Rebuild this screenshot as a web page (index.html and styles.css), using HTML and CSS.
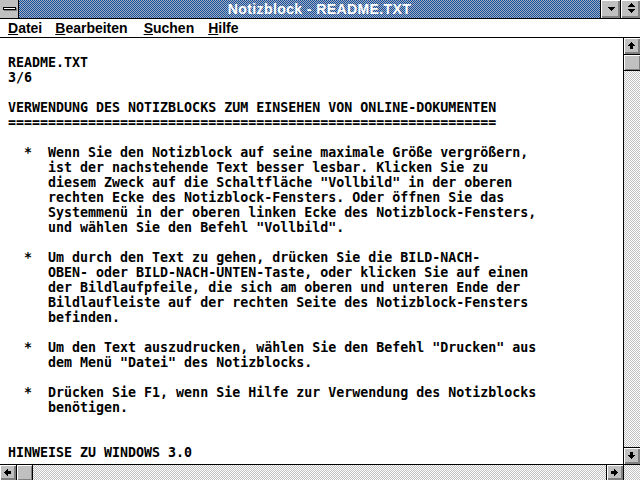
FILE: index.html
```html
<!DOCTYPE html>
<html lang="de">
<head>
<meta charset="utf-8">
<title>Notizblock - README.TXT</title>
<link rel="stylesheet" href="styles.css">
</head>
<body>
<div class="window">
  <div class="titlebar">
    <div class="sysbox"><div class="sysbar"></div></div>
    <div class="title">Notizblock - README.TXT</div>
    <div class="tbtn">
      <svg width="18" height="18" viewBox="0 0 18 18" shape-rendering="crispEdges"><rect x="6" y="7" width="7" height="1"/><rect x="7" y="8" width="5" height="1"/><rect x="8" y="9" width="3" height="1"/><rect x="9" y="10" width="1" height="1"/></svg>
    </div>
    <div class="tbtn">
      <svg width="18" height="18" viewBox="0 0 18 18" shape-rendering="crispEdges"><rect x="9" y="3" width="1" height="1"/><rect x="8" y="4" width="3" height="1"/><rect x="7" y="5" width="5" height="1"/><rect x="6" y="6" width="7" height="1"/><rect x="6" y="9" width="7" height="1"/><rect x="7" y="10" width="5" height="1"/><rect x="8" y="11" width="3" height="1"/><rect x="9" y="12" width="1" height="1"/></svg>
    </div>
  </div>
  <div class="menubar">
    <span class="menu m1"><u>D</u>atei</span>
    <span class="menu m2"><u>B</u>earbeiten</span>
    <span class="menu m3"><u>S</u>uchen</span>
    <span class="menu"><u>H</u>ilfe</span>
  </div>
  <div class="client">
    <pre class="text">

README.TXT
3/6

VERWENDUNG DES NOTIZBLOCKS ZUM EINSEHEN VON ONLINE-DOKUMENTEN
=============================================================

  *  Wenn Sie den Notizblock auf seine maximale Größe vergrößern,
     ist der nachstehende Text besser lesbar. Klicken Sie zu
     diesem Zweck auf die Schaltfläche "Vollbild" in der oberen
     rechten Ecke des Notizblock-Fensters. Oder öffnen Sie das
     Systemmenü in der oberen linken Ecke des Notizblock-Fensters,
     und wählen Sie den Befehl "Vollbild".

  *  Um durch den Text zu gehen, drücken Sie die BILD-NACH-
     OBEN- oder BILD-NACH-UNTEN-Taste, oder klicken Sie auf einen
     der Bildlaufpfeile, die sich am oberen und unteren Ende der
     Bildlaufleiste auf der rechten Seite des Notizblock-Fensters
     befinden.

  *  Um den Text auszudrucken, wählen Sie den Befehl "Drucken" aus
     dem Menü "Datei" des Notizblocks.

  *  Drücken Sie F1, wenn Sie Hilfe zur Verwendung des Notizblocks
     benötigen.


HINWEISE ZU WINDOWS 3.0</pre>
    <div class="vscroll">
      <div class="sbtn">
        <svg width="16" height="16" viewBox="0 0 16 16" shape-rendering="crispEdges"><rect x="7" y="4" width="1" height="1"/><rect x="6" y="5" width="3" height="1"/><rect x="5" y="6" width="5" height="1"/><rect x="4" y="7" width="7" height="1"/><rect x="6" y="8" width="3" height="3"/></svg>
      </div>
      <div class="sthumb"></div>
      <div class="track"></div>
      <div class="sbtn sbtn-bottom">
        <svg width="16" height="16" viewBox="0 0 16 16" shape-rendering="crispEdges"><rect x="6" y="4" width="3" height="3"/><rect x="4" y="7" width="7" height="1"/><rect x="5" y="8" width="5" height="1"/><rect x="6" y="9" width="3" height="1"/><rect x="7" y="10" width="1" height="1"/></svg>
      </div>
    </div>
  </div>
  <div class="hscroll">
    <div class="hbtn">
      <svg width="16" height="16" viewBox="0 0 16 16" shape-rendering="crispEdges"><rect x="4" y="7" width="1" height="1"/><rect x="5" y="6" width="1" height="3"/><rect x="6" y="5" width="1" height="5"/><rect x="7" y="4" width="1" height="7"/><rect x="8" y="6" width="3" height="3"/></svg>
    </div>
    <div class="hthumb"></div>
    <div class="track"></div>
    <div class="hbtn hbtn-right">
      <svg width="16" height="16" viewBox="0 0 16 16" shape-rendering="crispEdges"><rect x="4" y="6" width="3" height="3"/><rect x="7" y="4" width="1" height="7"/><rect x="8" y="5" width="1" height="5"/><rect x="9" y="6" width="1" height="3"/><rect x="10" y="7" width="1" height="1"/></svg>
    </div>
    <div class="corner"></div>
  </div>
</div>
</body>
</html>
```

FILE: styles.css
```css
html, body {
  margin: 0;
  padding: 0;
  background: #ffffff;
}

.window {
  width: 640px;
  height: 480px;
  display: flex;
  flex-direction: column;
  overflow: hidden;
  background: #ffffff;
}

.titlebar {
  height: 18px;
  display: flex;
  border-bottom: 1px solid #000;
  flex: none;
}

.sysbox {
  width: 18px;
  height: 18px;
  background: #c0c0c0;
  border-right: 1px solid #000;
  display: flex;
  align-items: center;
  justify-content: center;
  flex: none;
}

.sysbar {
  width: 11px;
  height: 1px;
  background: #fff;
  border: 1px solid #000;
  box-shadow: 1px 1px 0 #808080;
  margin-top: -1px;
}

.title {
  flex: 1;
  height: 18px;
  line-height: 18px;
  padding-left: 20px;
  text-align: center;
  color: #ffffff;
  font-family: "Liberation Sans", Arial, sans-serif;
  font-weight: bold;
  font-size: 14px;
  letter-spacing: 0.4px;
  background-color: #5878a8;
  background-image: repeating-conic-gradient(#1050a0 0% 25%, #a8acbc 0% 50%);
  background-size: 2px 2px;
}

.tbtn {
  width: 19px;
  height: 18px;
  border-left: 1px solid #000;
  background: #c0c0c0;
  box-shadow: inset 1px 1px 0 #fff, inset -1px -1px 0 #808080, inset -2px -2px 0 #808080;
  flex: none;
  display: flex;
  justify-content: center;
}

.tbtn svg {
  fill: #000;
  display: block;
}

.menubar {
  height: 18px;
  border-bottom: 1px solid #000;
  display: flex;
  align-items: center;
  font-family: "Liberation Sans", Arial, sans-serif;
  font-weight: bold;
  font-size: 14px;
  color: #000;
  padding-left: 8px;
  flex: none;
}

.menu {
  line-height: 18px;
}

.m1 { margin-right: 13px; }
.m2 { margin-right: 16px; }
.m3 { margin-right: 14px; }

.client {
  flex: 1;
  display: flex;
  min-height: 0;
}

.text {
  flex: 1;
  margin: 0;
  padding: 2px 0 0 8px;
  font-family: "DejaVu Sans Mono", "Liberation Mono", monospace;
  font-weight: bold;
  font-size: 13.3px;
  line-height: 15px;
  color: #000;
  overflow: hidden;
  white-space: pre;
}

.vscroll {
  width: 16px;
  border-left: 1px solid #000;
  display: flex;
  flex-direction: column;
  flex: none;
}

.sbtn, .hbtn {
  width: 16px;
  height: 16px;
  background: #c0c0c0;
  box-shadow: inset 1px 1px 0 #fff, inset -1px -1px 0 #808080, inset -2px -2px 0 #808080;
  flex: none;
}

.sbtn svg, .hbtn svg {
  fill: #000;
  display: block;
}

.sthumb {
  height: 15px;
  border-top: 1px solid #000;
  border-bottom: 1px solid #000;
  background: #c0c0c0;
  box-shadow: inset 1px 1px 0 #fff, inset -1px -1px 0 #808080;
  flex: none;
}

.track {
  flex: 1;
  background-color: #e0e0e0;
  background-image: repeating-conic-gradient(#c0c0c0 0% 25%, #ffffff 0% 50%);
  background-size: 2px 2px;
}

.sbtn-bottom {
  border-top: 1px solid #000;
}

.hscroll {
  height: 15px;
  border-top: 1px solid #000;
  display: flex;
  flex: none;
}

.hbtn {
  height: 15px;
  overflow: hidden;
}

.hthumb {
  width: 15px;
  height: 15px;
  border-left: 1px solid #000;
  border-right: 1px solid #000;
  background: #c0c0c0;
  box-shadow: inset 1px 1px 0 #fff, inset -1px -1px 0 #808080;
  flex: none;
}

.hbtn-right {
  border-left: 1px solid #000;
}

.corner {
  width: 16px;
  border-left: 1px solid #000;
  background-image: repeating-conic-gradient(#c0c0c0 0% 25%, #ffffff 0% 50%);
  background-size: 2px 2px;
  flex: none;
}
```
